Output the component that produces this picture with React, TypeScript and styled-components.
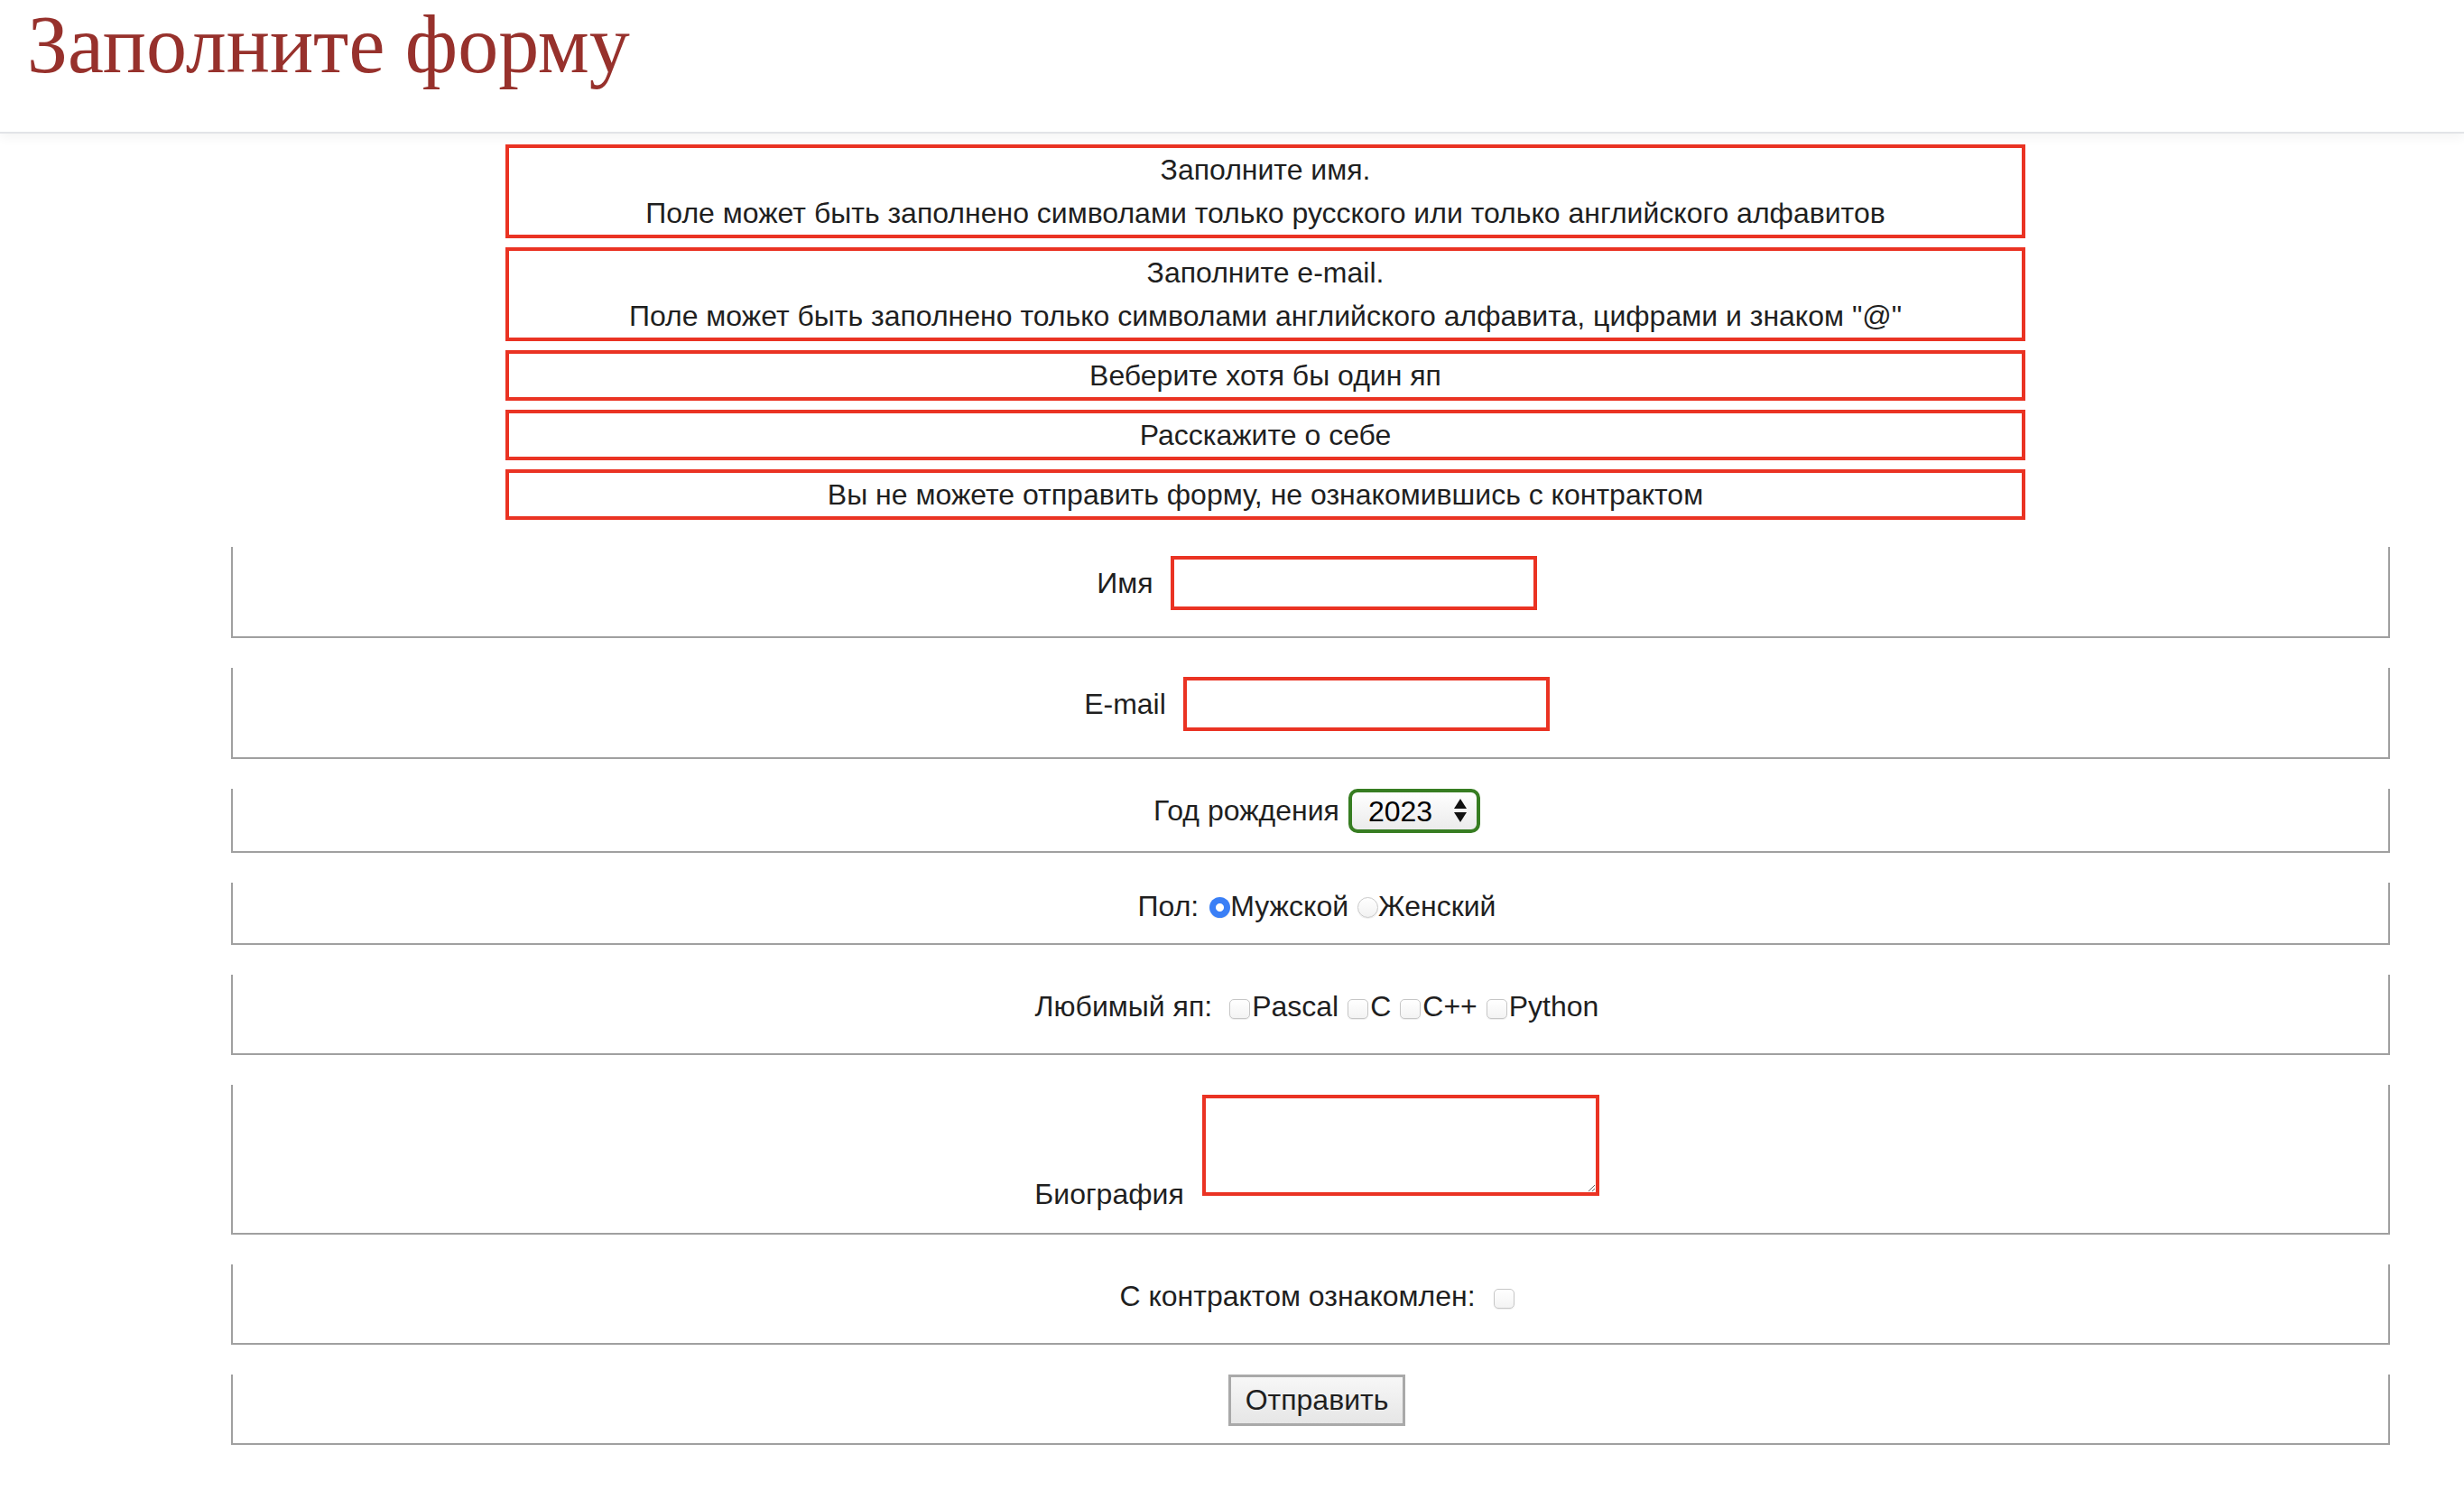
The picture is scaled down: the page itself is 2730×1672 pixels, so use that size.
import React, { useState } from "react";
import styled, { createGlobalStyle } from "styled-components";

const GlobalStyle = createGlobalStyle`
  html, body {
    margin: 0;
    padding: 0;
    background: #ffffff;
  }
  body {
    font-family: "Liberation Sans", Arial, sans-serif;
    font-size: 32px;
    color: #1f1f1f;
  }
`;

const RED = "#ea3323";

const Header = styled.header`
  box-sizing: border-box;
  height: 148px;
  padding-left: 30px;
  border-bottom: 2px solid #e2e4e7;
  box-shadow: 0 4px 12px rgba(0, 0, 0, 0.05);
`;

const Title = styled.h1`
  margin: 0;
  font-family: "Liberation Serif", "Times New Roman", serif;
  font-size: 90px;
  font-weight: normal;
  line-height: 100px;
  color: #97312c;
`;

const ErrorList = styled.div`
  display: flex;
  flex-direction: column;
  gap: 10px;
  width: 1684px;
  margin: 12px 0 0 560px;
`;

const ErrorBox = styled.div`
  box-sizing: border-box;
  border: 4px solid ${RED};
  text-align: center;
  line-height: 48px;
`;

const Form = styled.form`
  display: flex;
  flex-direction: column;
  gap: 33px;
  width: 2392px;
  margin: 30px 0 60px 256px;
`;

const Fieldset = styled.fieldset<{ $pt: number; $pb: number }>`
  box-sizing: border-box;
  margin: 0;
  min-width: 0;
  border: 2px solid #a0a0a0;
  border-top: none;
  padding: ${(p) => p.$pt}px 0 ${(p) => p.$pb}px 14px;
`;

const Row = styled.div<{ $end?: boolean }>`
  display: flex;
  justify-content: center;
  align-items: ${(p) => (p.$end ? "flex-end" : "center")};
  line-height: 37px;
`;

const Label = styled.label<{ $gap?: number }>`
  margin-right: ${(p) => p.$gap ?? 0}px;
  white-space: pre;
`;

const TextInput = styled.input`
  box-sizing: border-box;
  width: 406px;
  height: 60px;
  border: 4px solid ${RED};
  padding: 0 8px;
  font: inherit;
  outline: none;
`;

const Bio = styled.textarea`
  box-sizing: border-box;
  width: 440px;
  height: 112px;
  margin: 0 0 17px 0;
  border: 4px solid ${RED};
  font: inherit;
  outline: none;
`;

const SelectWrap = styled.span`
  position: relative;
  display: inline-block;
`;

const YearSelect = styled.select`
  appearance: none;
  box-sizing: border-box;
  width: 146px;
  height: 49px;
  padding: 0 0 0 18px;
  border: 4px solid #377d22;
  border-radius: 10px;
  background: linear-gradient(#ffffff, #ebebeb);
  font-family: "Liberation Sans", Arial, sans-serif;
  font-size: 32px;
  color: #000;
  outline: none;
`;

const Arrows = styled.svg`
  position: absolute;
  right: 14px;
  top: 10px;
  pointer-events: none;
`;

const Radio = styled.input.attrs({ type: "radio" })`
  appearance: none;
  box-sizing: border-box;
  width: 23px;
  height: 23px;
  margin: 2px 0 0 0;
  border-radius: 50%;
  border: 1px solid #c9c9c9;
  background: linear-gradient(#ffffff, #f2f2f2);
  box-shadow: 0 1px 1px rgba(0, 0, 0, 0.08);
  &:checked {
    border: none;
    background: radial-gradient(circle, #ffffff 0 4px, #3a7ff6 5px);
  }
`;

const Check = styled.input.attrs({ type: "checkbox" })<{ $gap?: number }>`
  appearance: none;
  box-sizing: border-box;
  width: 23px;
  height: 22px;
  margin: 4px ${(p) => p.$gap ?? 0}px 0 0;
  border: 1px solid #c6c6c6;
  border-radius: 5px;
  background: linear-gradient(#ffffff, #f3f3f3);
  box-shadow: 0 1px 1px rgba(0, 0, 0, 0.07);
`;

const Option = styled.span<{ $gap?: number }>`
  margin-right: ${(p) => p.$gap ?? 0}px;
`;

const SubmitButton = styled.button`
  box-sizing: border-box;
  height: 57px;
  padding: 0 16px;
  border: 3px solid #a9a9a9;
  background: linear-gradient(#f7f7f7, #e6e6e6);
  font-family: "Liberation Sans", Arial, sans-serif;
  font-size: 32px;
  color: #1f1f1f;
`;

const errors = [
  [
    "Заполните имя.",
    "Поле может быть заполнено символами только русского или только английского алфавитов",
  ],
  [
    "Заполните e-mail.",
    'Поле может быть заполнено только символами английского алфавита, цифрами и знаком "@"',
  ],
  ["Веберите хотя бы один яп"],
  ["Расскажите о себе"],
  ["Вы не можете отправить форму, не ознакомившись с контрактом"],
];

const languages = ["Pascal", "C", "C++", "Python"];

export default function App() {
  const [gender, setGender] = useState("m");

  return (
    <>
      <GlobalStyle />
      <Header>
        <Title>Заполните форму</Title>
      </Header>

      <ErrorList>
        {errors.map((lines, i) => (
          <ErrorBox key={i}>
            {lines.map((l, j) => (
              <div key={j}>{l}</div>
            ))}
          </ErrorBox>
        ))}
      </ErrorList>

      <Form onSubmit={(e) => e.preventDefault()}>
        <Fieldset $pt={10} $pb={29}>
          <Row>
            <Label $gap={19}>Имя</Label>
            <TextInput type="text" name="name" />
          </Row>
        </Fieldset>

        <Fieldset $pt={10} $pb={29}>
          <Row>
            <Label $gap={19}>E-mail</Label>
            <TextInput type="text" name="email" />
          </Row>
        </Fieldset>

        <Fieldset $pt={0} $pb={20}>
          <Row>
            <Label $gap={10}>Год рождения</Label>
            <SelectWrap>
              <YearSelect defaultValue="2023">
                <option>2023</option>
                <option>2022</option>
                <option>2021</option>
              </YearSelect>
              <Arrows width="16" height="28" viewBox="0 0 16 28">
                <path d="M8 1 L15 12 L1 12 Z" fill="#111" />
                <path d="M1 16 L15 16 L8 27 Z" fill="#111" />
              </Arrows>
            </SelectWrap>
          </Row>
        </Fieldset>

        <Fieldset $pt={8} $pb={22}>
          <Row>
            <Label $gap={12}>Пол:</Label>
            <Radio
              name="gender"
              checked={gender === "m"}
              onChange={() => setGender("m")}
            />
            <Option $gap={10}>Мужской</Option>
            <Radio
              name="gender"
              checked={gender === "f"}
              onChange={() => setGender("f")}
            />
            <Option>Женский</Option>
          </Row>
        </Fieldset>

        <Fieldset $pt={17} $pb={33}>
          <Row>
            <Label $gap={19}>Любимый яп:</Label>
            {languages.map((lang, i) => (
              <React.Fragment key={lang}>
                <Check $gap={2} />
                <Option $gap={i < languages.length - 1 ? 10 : 0}>{lang}</Option>
              </React.Fragment>
            ))}
          </Row>
        </Fieldset>

        <Fieldset $pt={11} $pb={24}>
          <Row $end>
            <Label $gap={20}>Биография</Label>
            <Bio name="bio" />
          </Row>
        </Fieldset>

        <Fieldset $pt={17} $pb={33}>
          <Row>
            <Label $gap={20}>С контрактом ознакомлен:</Label>
            <Check />
          </Row>
        </Fieldset>

        <Fieldset $pt={0} $pb={19}>
          <Row>
            <SubmitButton type="submit">Отправить</SubmitButton>
          </Row>
        </Fieldset>
      </Form>
    </>
  );
}
